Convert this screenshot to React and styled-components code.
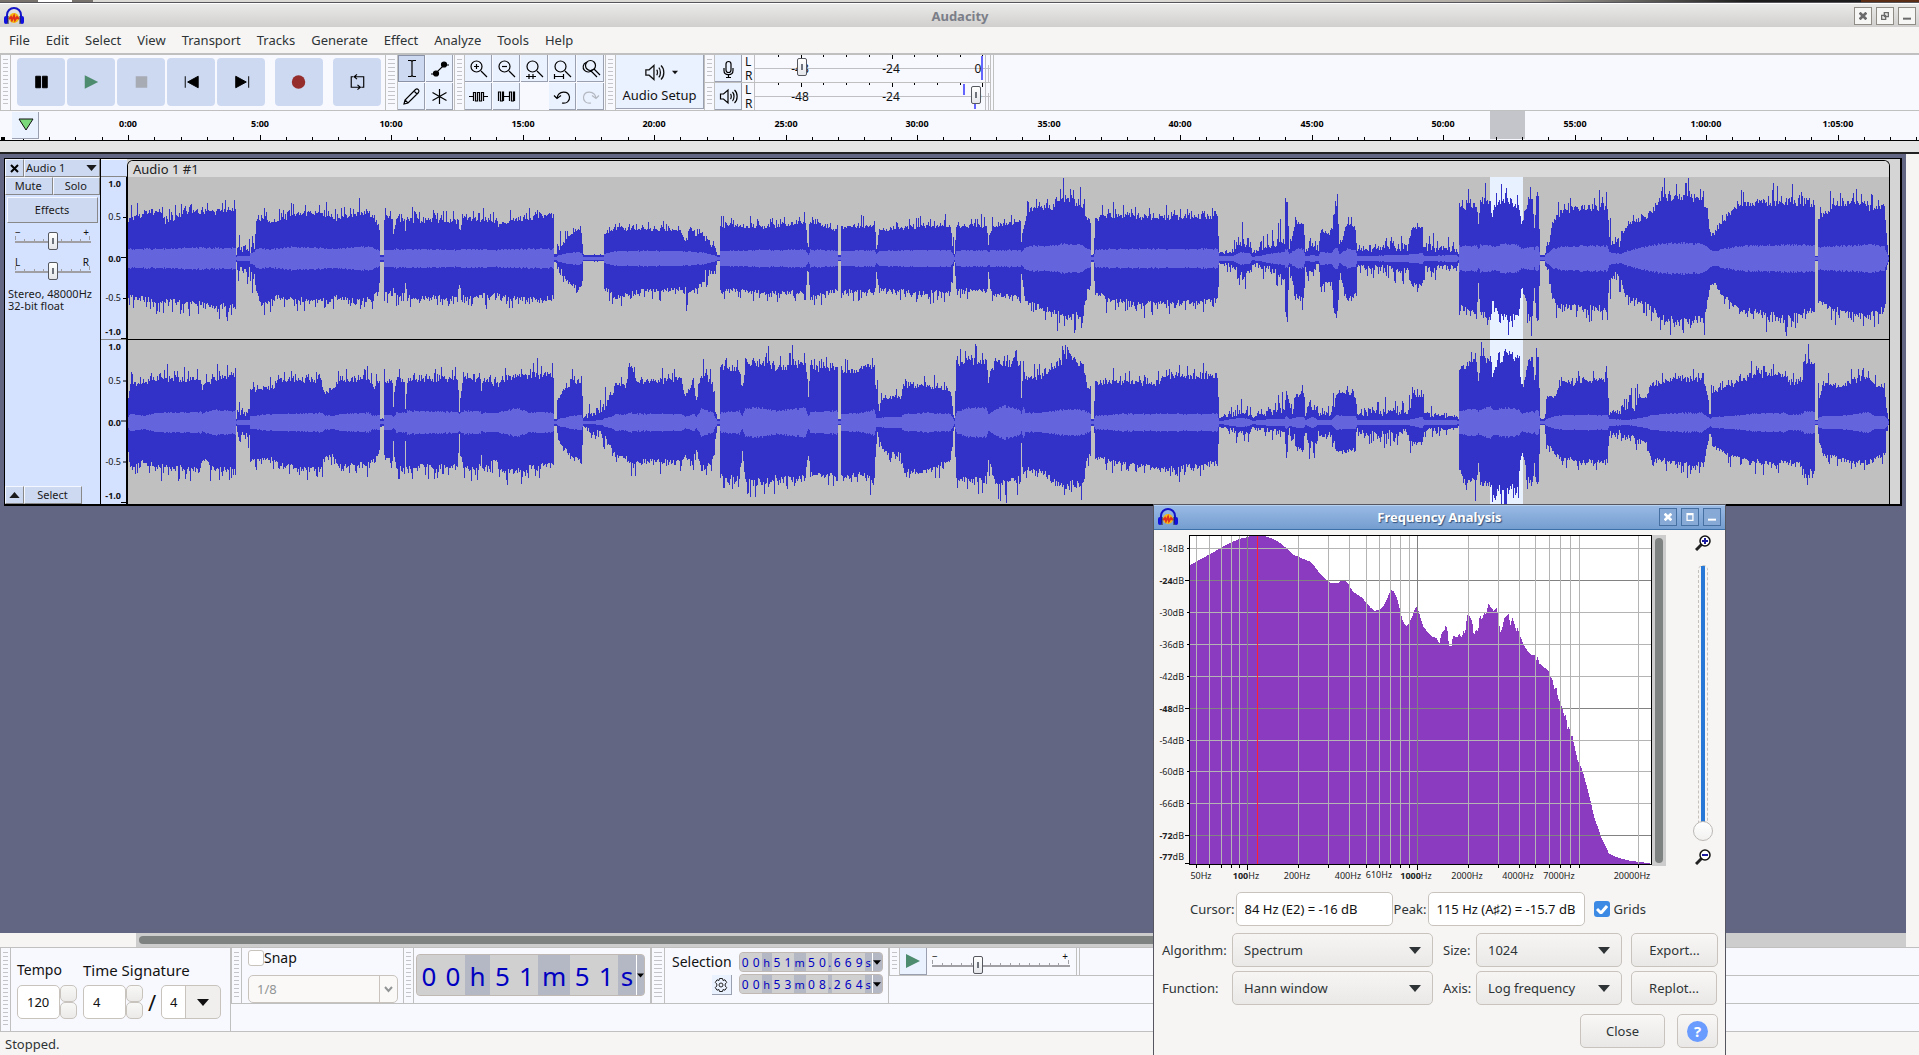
import React from 'react'
import styled, { createGlobalStyle, css } from 'styled-components'

const GlobalStyle = createGlobalStyle`
  * {
    box-sizing: border-box;
  }

  body {
    margin: 0;
    overflow: hidden;
    background: #f6f5f4;
    color: #2e3436;
    font-family: 'Noto Sans', sans-serif;
    font-size: 13px;
    line-height: 18px;
  }

  button, input, select {
    margin: 0;
    padding: 0;
    font: inherit;
    color: inherit;
  }

  svg {
    display: block;
    flex: none;
  }
`

const line = '#c0c0c0'
const paper = '#f8f9ff'

/* ---------- window frame ---------- */

const Page = styled.div`
  position: relative;
  display: flex;
  flex-direction: column;
  height: 100vh;
  overflow: hidden;
`

const DesktopEdge = styled.div`
  height: 3px;
  flex: none;
  border-bottom: 1px solid #55555a;
  background: linear-gradient(90deg, #77736c 0 38px, #fff 38px 72px, #77736c 72px 93px, #dcdad4 93px 60%, #a8a49c 80%, #1c1c1c 91% 97%, #5a2d14 97%);
`

const TitleBar = styled.header`
  display: grid;
  grid-template-columns: 1fr auto 1fr;
  align-items: center;
  height: 24px;
  flex: none;
  padding: 0 3px 0 4px;
  border-top: 1px solid #fff;
  background: linear-gradient(#eaeae8, #d0cfcd);
`

const WindowTitle = styled.h1`
  margin: 0;
  font-size: 13px;
  line-height: 18px;
  color: #7b7e88;
`

const WindowButtons = styled.div`
  display: flex;
  justify-content: flex-end;
  gap: 4px;
`

const WindowButton = styled.button`
  display: grid;
  place-items: center;
  width: 18px;
  height: 18px;
  border: 1px solid #8f8d86;
  background: #f6f6f5;
  color: #6b6b6b;

  ${p => p.$blue && css`
    border-color: #466fa2;
    background: #86a9d6;
    color: #fff;
  `}
`

const MenuBar = styled.nav`
  display: flex;
  align-items: center;
  gap: 16px;
  height: 27px;
  flex: none;
  padding: 0 9px;
  border-bottom: 1px solid ${line};
`

const MenuItem = styled.button`
  border: 0;
  background: none;
`

/* ---------- toolbars ---------- */

const ToolDock = styled.div`
  display: flex;
  height: 57px;
  flex: none;
  border-top: 1px solid ${line};
  border-bottom: 1px solid ${line};
  background: ${paper};
`

const Grip = styled.div`
  width: ${p => p.$width || 11}px;
  flex: none;
  border-left: 1px solid ${line};
  border-right: 1px solid ${line};
  padding: 4px 2px;

  &::before {
    content: '';
    display: block;
    height: 100%;
    background: repeating-linear-gradient(#c4c4c8 0 1px, transparent 1px 4px);
  }
`

const Transport = styled.div`
  display: flex;
  gap: 2px;
  padding: 3px 4px 3px 6px;
`

const TransportButton = styled.button`
  display: grid;
  place-items: center;
  width: 48px;
  height: 48px;
  margin-left: ${p => (p.$apart ? 8 : 0)}px;
  border: 0;
  border-radius: 4px;
  background: #cdd9f1;
`

const ToolGrid = styled.div`
  display: grid;
  grid-template-columns: repeat(${p => p.$cols}, 28px);
  grid-auto-rows: 28px;
`

const ToolButton = styled.button`
  display: grid;
  place-items: center;
  width: 27px;
  height: 27px;
  border: 0;
  border-right: 1px solid #9aa0b0;
  border-bottom: 1px solid #9aa0b0;
  background: #ebf2ff;
  color: #000;

  ${p => p.$pressed && css`
    border: 1px solid #8a92a8;
    background: #cdd9f1;
  `}

  ${p => p.$dim && css`
    color: #b4b8c0;
  `}
`

const SetupButton = styled.button`
  display: flex;
  flex-direction: column;
  align-items: center;
  justify-content: space-between;
  width: 88px;
  height: 54px;
  padding: 4px 0 5px;
  border: 0;
  border-right: 1px solid #9aa0b0;
  border-bottom: 1px solid #9aa0b0;
  background: #ebf2ff;
  color: #111;
`

const Meters = styled.div`
  display: flex;
  flex-direction: column;
`

const MeterRow = styled.div`
  display: flex;
  height: 28px;
  border-bottom: 1px solid ${line};

  & + & {
    border-bottom: 0;
  }
`

const Channels = styled.div`
  display: flex;
  flex-direction: column;
  width: 12px;
  padding: 0 3px;
  color: #111;
  font-size: 12px;
  line-height: 14px;
`

const Scale = styled.div`
  position: relative;
  width: 236px;
`

const Range = styled.input.attrs({ type: 'range' })`
  position: absolute;
  left: 0;
  top: ${p => p.$top || 0}px;
  width: 100%;
  height: 18px;
  appearance: none;
  background: none;

  &::-webkit-slider-thumb {
    appearance: none;
    width: 10px;
    height: 18px;
    border: 1px solid #55585f;
    border-radius: 2px;
    background: linear-gradient(#70747c, #70747c) center / 2px 6px no-repeat, linear-gradient(#fff, #e4e6ea);
  }
`

const DockEnd = styled.div`
  width: 4px;
  border-left: 1px solid ${line};
  border-right: 1px solid ${line};
`

/* ---------- timeline ---------- */

const Timeline = styled.div`
  position: relative;
  height: 30px;
  flex: none;
  overflow: hidden;
  border-bottom: 1px solid #000;
  background: ${paper};
`

const PinButton = styled(ToolButton)`
  position: absolute;
  left: 12px;
  top: 1px;
  padding-left: 2px;
`

const Spacer = styled.div`
  height: 13px;
  flex: none;
  border-bottom: 2px solid #222;
  background: #e4e4e4;
`

/* ---------- tracks ---------- */

const Workspace = styled.main`
  flex: 1;
  min-height: 0;
  margin-right: 13px;
  padding: 4px;
  background: #636683;
`

const Track = styled.section`
  display: flex;
  border: solid #000;
  border-width: 1px 2px 2px 1px;
  background: #d5d5d5;
`

const Panel = styled.div`
  display: flex;
  flex-direction: column;
  width: 96px;
  flex: none;
  border-right: 1px solid #000;
  background: #d5e2ff;
  color: #1a1a1a;
  font-size: 11px;
  line-height: 12px;
`

const PanelRow = styled.div`
  display: flex;
  height: 18px;
`

const PanelButton = styled.button`
  display: flex;
  align-items: center;
  justify-content: ${p => (p.$spread ? 'space-between' : 'center')};
  flex: ${p => (p.$width ? 'none' : 1)};
  width: ${p => (p.$width ? p.$width + 'px' : 'auto')};
  padding: 0 2px 0 1px;
  border: 1px solid #f4f7ff;
  border-right-color: #888;
  border-bottom-color: #888;
  background: #cdd9f1;
`

const EffectsButton = styled(PanelButton)`
  flex: none;
  height: 26px;
  margin: 2px 2px 5px;
`

const PanelSlider = styled.div`
  position: relative;
  height: 30px;
  margin: 0 9px 0 10px;
`

const Format = styled.p`
  flex: 1;
  margin: 0;
  padding: 0 3px;
`

const VRuler = styled.div`
  width: 26px;
  flex: none;
  border-top: 1px solid #fff;
  background: #d5e2ff;
`

const VRulerHead = styled.div`
  height: 17px;
  border-bottom: 1px solid #888;
`

const ClipArea = styled.div`
  flex: 1;
  min-width: 0;
  padding-top: 1px;
`

const Clip = styled.div`
  margin-right: 10px;
  border: 1px solid #000;
  border-bottom: 0;
  border-radius: 6px 6px 0 0;
  overflow: hidden;
`

const ClipTitle = styled.div`
  height: 16px;
  padding-left: 5px;
  background: #dadada;
  color: #222;
  line-height: 16px;
`

const Channel = styled.div`
  position: relative;
  height: ${p => p.$height}px;
  border-bottom: ${p => (p.$last ? 0 : 1)}px solid #000;
  background: #c0c0c0;

  svg {
    width: 100%;
    height: 100%;
  }
`

const ScrollRow = styled.div`
  height: 14px;
  flex: none;
  margin: 0 13px 0 136px;
  padding: 3px 220px 3px 3px;
  background: #cdcdcd;
`

const ScrollThumb = styled.div`
  height: 8px;
  border-radius: 4px;
  background: #7e8280;
`

/* ---------- bottom toolbars ---------- */

const BottomDock = styled.div`
  display: flex;
  height: 85px;
  flex: none;
  border-top: 1px solid ${line};
  border-bottom: 1px solid ${line};
  background: ${paper};
  color: #111;
`

const TempoBar = styled.div`
  display: flex;
  align-items: flex-start;
  width: 220px;
  gap: 6px;
  padding: 12px 0 0 6px;
  border-right: 1px solid ${line};
`

const Field = styled.div`
  display: flex;
  flex-direction: column;
  gap: 5px;
  font-size: ${p => p.$size || 14}px;
  line-height: 20px;
  white-space: nowrap;
`

const Inline = styled.div`
  display: flex;
  align-items: center;
  gap: ${p => p.$gap || 0}px;
`

const boxed = css`
  border: 1px solid #c8c3bd;
  border-radius: 5px;
  background: #fff;
`

const NumberBox = styled.input`
  ${boxed}
  width: 43px;
  height: 34px;
  padding-left: 9px;
  font-size: 13px;
`

const Spinner = styled.div`
  display: flex;
  flex-direction: column;

  button {
    width: 17px;
    height: 17px;
    border: 1px solid #c8c3bd;
    border-radius: 5px;
    background: linear-gradient(#f8f8f7, #ebeae8);
  }
`

const Slash = styled.span`
  width: 18px;
  font-size: 22px;
  text-align: center;
`

const SelectWrap = styled.div`
  position: relative;
  display: flex;
  width: ${p => p.$width}px;

  svg {
    position: absolute;
    right: ${p => p.$arrow || 12}px;
    top: 50%;
    margin-top: -3px;
    pointer-events: none;
  }
`

const Select = styled.select`
  width: 100%;
  height: 34px;
  padding-left: 11px;
  appearance: none;
  border: 1px solid #c8c3bd;
  border-radius: 5px;
  background: linear-gradient(#f6f5f4, #eae9e7);
  font-size: 13px;
  opacity: 1;

  ${p => p.$split && css`
    padding-left: 8px;
    background: linear-gradient(90deg, #fff 0 23px, #c8c3bd 23px 24px, #f0efee 24px);
    color: #111;
  `}

  ${p => p.$narrow && css`
    height: 28px;
    padding-left: 8px;
    background: linear-gradient(90deg, #faf9f8 0 130px, #c8c3bd 130px 131px, #faf9f8 131px);
    color: #929595;
  `}
`

const BottomRight = styled.div`
  flex: 1;
`

const BottomRow = styled.div`
  display: flex;
  height: 56px;
  border-bottom: 1px solid ${line};
`

const SnapBar = styled.div`
  display: flex;
  flex-direction: column;
  justify-content: space-between;
  width: 161px;
  padding: 1px 5px 0 6px;
  font-size: 14px;
`

const Check = styled.input.attrs({ type: 'checkbox' })`
  width: 16px;
  height: 16px;
  appearance: none;
  border: 1px solid #c8c3bd;
  border-radius: 3px;
  background: #fff;

  &:checked {
    border: 0;
    background: #3d8ae5;
  }
`

const CheckBox = styled.span`
  position: relative;
  display: flex;

  svg {
    position: absolute;
    left: 2px;
    top: 3px;
    pointer-events: none;
  }
`

const TimeBar = styled.div`
  display: flex;
  align-items: flex-start;
  width: 237px;
  padding: 6px 0 0 2px;
  border-right: 1px solid ${line};
`

const TimeBox = styled.div`
  display: flex;
  overflow: hidden;
  width: ${p => (p.$large ? 229 : 144)}px;
  height: ${p => (p.$large ? 42 : 20)}px;
  border: 1px solid #c0b8b2;
  border-radius: 4px;
  background: #d0d0d0;
  color: #0000c0;
  font-size: ${p => (p.$large ? 26 : 12)}px;
  line-height: ${p => (p.$large ? 42 : 19)}px;
`

const unitWidths = { h: 27, m: 34, s: 19, '.': 10 }

const Digit = styled.span`
  flex: ${p => (p.$unit ? `${p.$unit} 1 0` : 'none')};
  min-width: 0;
  width: ${p => (p.$large ? 24 : 11)}px;
  background: ${p => (p.$unit ? '#b3b8c4' : '#d0d0d0')};
  text-align: center;
  font-size: ${p => (p.$unit && !p.$large ? '11px' : 'inherit')};
`

const TimeMenu = styled.button`
  display: grid;
  place-items: center;
  width: ${p => (p.$large ? 8 : 10)}px;
  border: 0;
  border-left: 1px solid #fff;
  background: #b3b8c4;
  color: #000;
`

const SelectionBar = styled.div`
  display: flex;
  width: 224px;
  gap: 7px;
  padding: 4px 0 0 7px;
  border-right: 1px solid ${line};
`

const SelectionSide = styled.div`
  display: flex;
  flex-direction: column;
  align-items: flex-end;
  gap: 3px;
  font-size: 14px;
  line-height: 20px;
`

const SelectionFields = styled.div`
  display: flex;
  flex-direction: column;
  gap: 2px;
`

const GearButton = styled(ToolButton)`
  width: 20px;
  height: 20px;
`

const SpeedColumn = styled.div`
  flex: 1;
`

const SpeedBar = styled.div`
  display: flex;
  height: 28px;
  border-bottom: 1px solid ${line};
`

const SpeedSlider = styled.div`
  position: relative;
  width: 138px;
  margin: 0 6px 0 5px;
`

const StatusBar = styled.footer`
  height: 23px;
  flex: none;
  padding: 3px 5px 2px;
`

/* ---------- frequency analysis dialog ---------- */

const Dialog = styled.section`
  position: absolute;
  right: 193px;
  top: 504px;
  bottom: 0;
  width: 573px;
  border: 1px solid #55565f;
  border-bottom: 0;
  background: #f6f5f4;
`

const DialogTitle = styled(TitleBar)`
  height: 25px;
  padding: 0 4px 2px;
  border-top: 1px solid #b6d0f0;
  border-bottom: 1px solid #3c70a8;
  background: linear-gradient(#98b9e4, #759ed0);

  h1 {
    color: #fff;
    text-shadow: 1px 1px 1px #33527c;
  }
`

const Plot = styled.div`
  display: flex;
  height: 362px;
  padding-top: 5px;
`

const PlotScroll = styled.div`
  width: 14px;
  height: 331px;
  padding: 3px;
  background: #cdcdcd;

  div {
    width: 8px;
    height: 100%;
    border-radius: 4px;
    background: #7e8280;
  }
`

const ZoomColumn = styled.div`
  display: flex;
  flex-direction: column;
  align-items: center;
  flex: 1;
  padding-left: 14px;
`

const Trough = styled.div`
  position: relative;
  width: 20px;
  height: 276px;
  margin: 14px 0 8px;

  &::before {
    content: '';
    position: absolute;
    inset: 0 5px 8px;
    border: 1px dashed #c4c0bc;
    border-radius: 5px;
    background: linear-gradient(#2878d8, #2878d8) center / 4px 100% no-repeat;
  }

  input {
    position: absolute;
    left: 0;
    top: 0;
    width: 20px;
    height: 276px;
    appearance: none;
    background: none;
    writing-mode: vertical-lr;
  }

  input::-webkit-slider-thumb {
    appearance: none;
    width: 20px;
    height: 20px;
    border: 1px solid #bcb8b4;
    border-radius: 50%;
    background: linear-gradient(#fff, #f2f1f0);
  }
`

const Readout = styled.div`
  display: flex;
  align-items: center;
  margin: 0 0 7px 36px;
  gap: 1px;
`

const ReadoutBox = styled.input`
  ${boxed}
  width: 157px;
  height: 34px;
  padding: 0 8px;
  color: #111;
`

const GridsLabel = styled.label`
  display: flex;
  align-items: center;
  gap: 4px;
  margin-left: 8px;
`

const Options = styled.div`
  display: grid;
  grid-template-columns: 70px 201px 43px 146px 87px;
  row-gap: 4px;
  align-items: center;
  padding: 0 7px 0 8px;

  label:nth-of-type(even) {
    padding-left: 10px;
  }
`

const PushButton = styled.button`
  display: grid;
  place-items: center;
  width: ${p => p.$width}px;
  height: 34px;
  border: 1px solid #c8c3bd;
  border-radius: 5px;
  background: linear-gradient(#f8f7f6, #e9e8e6);
`

const OptionButton = styled(PushButton)`
  margin-left: 9px;
`

const DialogButtons = styled.div`
  display: flex;
  justify-content: flex-end;
  gap: 12px;
  padding: 9px 7px 0 0;
`

const HelpMark = styled.span`
  display: grid;
  place-items: center;
  width: 21px;
  height: 21px;
  border-radius: 50%;
  background: #6a9bff;
  color: #fff;
  font-size: 15px;
  font-weight: bold;
`

/* ---------- icons ---------- */

const Logo = () => (
  <svg width="20" height="18" viewBox="0 0 20 18">
    <circle cx="10" cy="11" r="5" fill="#f7b90f" />
    <path d="M5 12l2-2 1 3 2-4 1 4 2-3 2 2" fill="none" stroke="#e0301e" strokeWidth="2" />
    <path d="M3 11V8a7 7 0 0 1 14 0v3" fill="none" stroke="#1414c8" strokeWidth="2" />
    <rect x="0" y="9" width="4" height="8" rx="2" fill="#1010e0" />
    <rect x="16" y="9" width="4" height="8" rx="2" fill="#1010e0" />
    <path d="M4 9v8M16 9v8" stroke="#223" />
  </svg>
)

const winGlyphs = {
  close: <path d="M.5.5l5 5M5.500.5l-5 5" stroke="currentColor" strokeWidth="2" />,
  restore: <path d="M2.5.5h3v3h-3zM.5 2.500h3v3h-3z" fill="none" stroke="currentColor" />,
  maximize: <path d="M.8.5h4.400v5H.8zM1 1.200h4" fill="none" stroke="currentColor" />,
  minimize: <path d="M0 5h6" stroke="currentColor" strokeWidth="1.500" />
}

const WinButtons = ({ blue }) => (
  <WindowButtons>
    {['close', blue ? 'maximize' : 'restore', 'minimize'].map(kind => (
      <WindowButton key={kind} $blue={blue} aria-label={kind}>
        <svg width="8" height="8" viewBox="0 0 6 6">{winGlyphs[kind]}</svg>
      </WindowButton>
    ))}
  </WindowButtons>
)

const transportIcons = [
  ['Pause', <path d="M7 6h5v12H7zM14 6h5v12h-5z" stroke="#000" strokeLinejoin="round" fill="#000" />],
  ['Play', <path d="M6 5l14 7-14 7z" fill="#4d8c6f" />],
  ['Stop', <path d="M7 6h12v12H7z" fill="#a7abb4" />],
  ['Skip to Start', <path d="M6.500 6v12M20 6L9 12l11 6z" fill="#000" stroke="#000" strokeWidth="1" />],
  ['Skip to End', <path d="M20.500 6v12M7 6l11 6-11 6z" fill="#000" stroke="#000" strokeWidth="1" />],
  ['Record', <circle cx="12" cy="12" r="7" fill="#962d2d" />],
  ['Loop', <path d="M8.500 6.500h-2v11h9M13 15l3 2.500-3 2.500M17 17.500h2.500v-11h-9M12.500 4l-3 2.500 3 2.500" fill="none" stroke="#000" strokeWidth="1.200" />]
]

const lens = <path d="M15 15l6 6M16 10.500a5.500 5.500 0 1 1-11 0 5.500 5.500 0 0 1 11 0z" />
const toolIcons = {
  select: <path d="M9 4.500h3l1 1 1-1h3M9 20.500h3l1-1 1 1h3M13 5v15" />,
  envelope: <g><path d="M4 18h4l9-9h5" /><circle cx="9" cy="17.500" r="2.500" fill="currentColor" /><circle cx="17" cy="8.500" r="2.500" fill="currentColor" /></g>,
  draw: <path d="M5 20l1-4L16.500 5.500c2-1.500 4.500 1 3 3L9 19zM15 7l3 3M6 16l3 3" />,
  multi: <path d="M12.500 5v15M5.500 8.500l14 8M19.500 8.500l-14 8" />,
  zoomIn: <g>{lens}<path d="M10.500 8v5M8 10.500h5" /></g>,
  zoomOut: <g>{lens}<path d="M8 10.500h5" /></g>,
  fitSelection: <g>{lens}<path d="M4 20.500h10M7 18v5M11 18v5" /></g>,
  fitProject: <g>{lens}<path d="M4 20.500h10M4.500 18v5M13.500 18v5" /></g>,
  zoomToggle: <g><path d="M17.500 9.500a5 5 0 1 1-10 0 5 5 0 0 1 10 0zM16 13l6 6" /><path d="M8 6.500a5 5 0 1 0 6.500 7M13 15l6 6" /></g>,
  trim: <path d="M3 12.500h4.500V17M17.500 8v4.500H22M7.500 17V8.500h2V17h2V8.500h2V17h2V8.500h2V17" />,
  silence: <path d="M4.500 17V8h2v9h2V8h1v9M9 12.500h7M15.500 17V8h2v9h2V8h1v9" />,
  undo: <path d="M12 19c4.500 1 8-2 7.500-6C18.500 6.500 8.500 6 7 14M4 11.500l3 3 4-3" />,
  redo: <path d="M13 19c-4.500 1-8-2-7.500-6C6.500 6.500 16.500 6 18 14M21 11.500l-3 3-4-3" />,
  mic: <path d="M10 8a2.500 2.500 0 0 1 5 0v6a2.500 2.500 0 0 1-5 0zM8 12v2.500c0 5.500 9 5.500 9 0V12M12.500 19v2.500M10 21.500h5" />,
  speaker: <path d="M4.500 10v5h3l4.500 4V6L7.500 10zM14.500 10c1 1 1 4 0 5M16.500 8c2 2 2 7 0 9M18.500 6c3.500 3 3.500 10 0 13" />
}

const Icon = ({ name, size = 25 }) => (
  <svg width={size} height={size} viewBox="0 0 25 25" fill="none" stroke="currentColor" strokeWidth="1.200">
    {toolIcons[name]}
  </svg>
)

const Tool = ({ icon, ...rest }) => (
  <ToolButton aria-label={icon} {...rest}>
    <Icon name={icon} />
  </ToolButton>
)

const Arrow = ({ w = 12, h = 7, up }) => (
  <svg width={w} height={h} viewBox="0 0 12 7">
    <path d={up ? 'M0 7h12L6 0z' : 'M0 0h12L6 7z'} fill="currentColor" />
  </svg>
)

const Magnifier = ({ minus }) => (
  <svg width="16" height="16" viewBox="0 0 16 16">
    <path d="M7 9l-6 6" stroke="#222" strokeWidth="3" />
    <circle cx="10" cy="6" r="5" fill="#fff" stroke="#111" strokeWidth="1.500" />
    <path d={minus ? 'M7 6h6' : 'M7 6h6M10 3v6'} stroke="#1c1ca0" strokeWidth="2" />
  </svg>
)

/* ---------- drawings ---------- */

const Meter = ({ label, value, peaks }) => (
  <Scale>
    <svg width="236" height="27" shapeRendering="crispEdges">
      <path d="M0.500 0v27M0 13.500h236M231.500 0v27M234.500 10v17" stroke="#c0c0c4" />
      <path d={[...Array(10).keys()].map(i => `M${24 + Math.round(i * 22.7)}.5 0v${i % 4 === 1 || i === 9 ? 4 : 2}`).join('')} stroke="#000" />
      <g fontSize="12" fill="#111" textAnchor="middle" fontFamily="'Noto Sans', sans-serif">
        <text x="46" y="18">-48</text>
        <text x="137" y="18">-24</text>
        <text x="224" y="18">0</text>
      </g>
      {peaks.map(([x, y, h]) => <rect key={x + y} x={x} y={y} width="2" height={h} fill="#6464ff" />)}
    </svg>
    <Range $top={3} defaultValue={value} aria-label={label} />
  </Scale>
)

const majors = ['0:00', '5:00', '10:00', '15:00', '20:00', '25:00', '30:00', '35:00', '40:00', '45:00', '50:00', '55:00', '1:00:00', '1:05:00']

const TimeRuler = () => (
  <svg width="100%" height="29">
    <rect x="1490" y="0" width="35" height="28" fill="#c4c5cb" />
    <g shapeRendering="crispEdges" fill="#000">
      {[...Array(75).keys()].map(i => {
        const x = Math.round(128 + (i - 5) * 26.3)
        return <rect key={i} x={x} y={i % 5 === 0 && i > 0 ? 24 : 26} width="1" height="5" />
      })}
      <rect x="1" y="26" width="4" height="3" />
    </g>
    <g fontSize="9" fontWeight="bold" textAnchor="middle" fill="#000" fontFamily="'Noto Sans', sans-serif">
      {majors.map((m, i) => <text key={m} x={Math.round(128 + i * 131.5)} y="16">{m}</text>)}
    </g>
  </svg>
)

// [x, upper, lower, rms] envelope points in pixels, straight lines in between
const left = [
  [128, 38, 37, 9], [147, 45, 41, 9], [160, 45, 44, 9], [165, 36, 42, 9], [170, 38, 41, 9], [183, 45, 43, 10], [235, 47, 48, 10], [236, 3, 3, 1], [237, 12, 12, 2], [249, 10, 12, 2], [250, 10, 20, 5], [254, 11, 22, 6], [256, 38, 32, 9], [262, 39, 46, 9], [275, 36, 38, 9], [290, 43, 40, 11], [320, 44, 41, 10], [335, 38, 38, 9], [355, 44, 42, 11], [372, 44, 40, 11], [379, 28, 25, 7], [380, 3, 3, 1], [383, 3, 3, 1], [384, 40, 34, 8], [392, 38, 34, 8], [393, 24, 28, 8], [396, 38, 38, 9], [404, 38, 36, 9], [405, 26, 24, 8], [407, 38, 38, 9], [457, 36, 38, 8], [459, 22, 24, 8], [463, 40, 38, 9], [496, 36, 36, 8], [498, 32, 36, 8], [510, 38, 38, 9], [540, 42, 40, 9], [553, 42, 38, 9], [554, 4, 3, 1], [556, 4, 3, 1], [558, 14, 16, 3], [576, 28, 28, 6], [581, 26, 28, 5], [583, 3, 2, 1], [603, 3, 2, 1], [604, 24, 28, 4], [614, 30, 38, 7], [640, 28, 32, 7], [680, 28, 30, 7], [685, 16, 28, 6], [690, 30, 34, 7], [697, 20, 30, 5], [699, 28, 25, 6], [714, 11, 14, 3], [717, 3, 2, 1], [719, 3, 2, 1], [720, 32, 30, 7], [760, 31, 33, 8], [805, 35, 34, 8], [808, 12, 12, 3], [810, 38, 38, 8], [820, 34, 34, 8], [837, 27, 31, 7], [838, 3, 2, 1], [840, 3, 2, 1], [841, 31, 32, 7], [874, 33, 32, 8], [876, 14, 13, 4], [879, 28, 30, 7], [920, 31, 34, 8], [950, 32, 32, 8], [954, 4, 3, 1], [956, 32, 31, 7], [986, 32, 31, 8], [988, 18, 16, 6], [992, 32, 34, 8], [1020, 36, 38, 8], [1021, 18, 16, 6], [1026, 42, 44, 11], [1032, 50, 44, 12], [1050, 50, 52, 12], [1063, 60, 58, 14], [1083, 52, 56, 13], [1086, 38, 32, 10], [1090, 34, 28, 8], [1091, 3, 3, 1], [1093, 3, 3, 1], [1095, 38, 34, 8], [1110, 43, 41, 9], [1157, 40, 45, 9], [1217, 42, 41, 9], [1219, 5, 4, 2], [1233, 9, 9, 2], [1240, 20, 22, 6], [1249, 18, 18, 5], [1252, 5, 5, 1], [1269, 14, 12, 4], [1284, 21, 20, 6], [1285, 56, 52, 9], [1287, 54, 50, 9], [1289, 12, 10, 4], [1296, 36, 38, 9], [1303, 36, 38, 9], [1305, 8, 12, 2], [1313, 18, 14, 3], [1318, 8, 8, 2], [1320, 26, 28, 6], [1331, 24, 20, 5], [1335, 52, 56, 10], [1337, 50, 54, 10], [1339, 14, 14, 4], [1347, 34, 40, 9], [1355, 30, 36, 8], [1357, 9, 9, 2], [1407, 13, 13, 3], [1412, 30, 27, 4], [1422, 30, 23, 5], [1424, 12, 12, 2], [1456, 10, 9, 3], [1458, 4, 4, 1], [1459, 50, 46, 12], [1476, 54, 57, 12], [1478, 30, 22, 9], [1480, 58, 56, 13], [1490, 57, 58, 13], [1492, 38, 40, 12], [1494, 52, 50, 12], [1505, 60, 60, 14], [1518, 52, 58, 13], [1521, 36, 28, 9], [1525, 40, 38, 9], [1528, 60, 56, 11], [1532, 58, 56, 11], [1534, 30, 28, 9], [1536, 60, 56, 11], [1538, 58, 56, 11], [1540, 3, 2, 1], [1544, 3, 2, 1], [1546, 14, 13, 4], [1549, 16, 20, 6], [1552, 36, 40, 9], [1560, 45, 48, 11], [1580, 50, 47, 12], [1607, 50, 50, 12], [1609, 22, 20, 6], [1620, 18, 20, 4], [1627, 34, 38, 7], [1647, 42, 46, 12], [1660, 58, 58, 14], [1680, 62, 63, 15], [1703, 57, 60, 14], [1707, 44, 42, 11], [1710, 22, 25, 8], [1715, 25, 25, 7], [1723, 36, 38, 9], [1740, 54, 50, 12], [1780, 56, 58, 13], [1814, 54, 50, 13], [1815, 2, 2, 1], [1817, 2, 2, 1], [1818, 38, 42, 10], [1833, 52, 50, 12], [1853, 57, 56, 12], [1869, 50, 54, 14], [1884, 53, 50, 11], [1886, 20, 20, 6], [1888, 3, 3, 1]
]

const right = [
  [128, 24, 26, 5], [130, 38, 46, 8], [143, 38, 38, 6], [156, 44, 44, 9], [200, 40, 46, 10], [202, 34, 36, 9], [215, 44, 46, 12], [235, 46, 46, 11], [236, 3, 3, 1], [237, 12, 12, 2], [249, 12, 12, 2], [250, 32, 38, 6], [272, 34, 36, 8], [281, 42, 42, 8], [321, 42, 47, 9], [324, 28, 34, 7], [333, 34, 32, 6], [339, 42, 44, 8], [368, 42, 40, 9], [374, 34, 38, 6], [379, 42, 28, 7], [380, 3, 3, 1], [383, 3, 3, 1], [384, 40, 32, 7], [392, 40, 36, 7], [393, 20, 22, 5], [396, 42, 46, 9], [404, 42, 46, 10], [405, 18, 22, 8], [407, 42, 44, 11], [457, 43, 42, 10], [459, 18, 20, 8], [463, 44, 46, 11], [480, 42, 44, 11], [481, 30, 32, 8], [483, 42, 46, 9], [498, 34, 36, 9], [500, 42, 46, 10], [518, 46, 48, 14], [529, 46, 44, 9], [550, 47, 42, 10], [553, 42, 38, 8], [554, 3, 3, 1], [556, 3, 3, 1], [558, 24, 16, 3], [571, 40, 34, 6], [581, 42, 38, 7], [583, 4, 3, 1], [589, 10, 10, 1], [600, 14, 14, 2], [612, 28, 26, 6], [616, 40, 34, 8], [625, 36, 34, 7], [631, 56, 42, 9], [636, 40, 38, 8], [681, 42, 39, 8], [685, 25, 32, 5], [693, 42, 36, 8], [696, 20, 26, 5], [701, 48, 46, 13], [712, 38, 38, 10], [717, 3, 3, 1], [719, 3, 3, 1], [720, 55, 52, 9], [739, 52, 56, 11], [742, 34, 28, 6], [745, 58, 58, 13], [755, 60, 60, 15], [775, 54, 56, 11], [805, 58, 56, 14], [808, 26, 24, 6], [810, 54, 50, 10], [837, 52, 54, 11], [838, 3, 2, 1], [840, 3, 2, 1], [841, 50, 52, 8], [860, 52, 52, 9], [874, 58, 55, 12], [876, 20, 16, 4], [885, 24, 28, 5], [900, 25, 30, 5], [904, 36, 48, 8], [925, 36, 48, 9], [950, 32, 38, 8], [954, 4, 4, 1], [956, 58, 58, 10], [967, 60, 54, 14], [986, 62, 56, 14], [988, 40, 38, 7], [995, 60, 58, 12], [1003, 60, 60, 16], [1020, 58, 56, 12], [1021, 25, 20, 8], [1023, 60, 54, 16], [1025, 42, 46, 9], [1040, 45, 48, 9], [1060, 58, 60, 12], [1067, 68, 62, 13], [1083, 55, 58, 12], [1087, 36, 34, 10], [1090, 34, 32, 8], [1091, 3, 3, 1], [1093, 3, 3, 1], [1095, 39, 34, 6], [1120, 40, 41, 8], [1155, 38, 44, 8], [1165, 45, 46, 8], [1217, 45, 40, 8], [1219, 4, 4, 1], [1240, 13, 12, 4], [1249, 12, 10, 3], [1252, 4, 4, 1], [1269, 12, 10, 3], [1284, 15, 12, 3], [1286, 30, 32, 6], [1289, 10, 10, 3], [1296, 26, 24, 5], [1303, 30, 26, 5], [1305, 6, 10, 2], [1312, 18, 32, 5], [1318, 10, 16, 2], [1331, 9, 11, 2], [1336, 27, 30, 7], [1347, 30, 28, 6], [1355, 24, 26, 6], [1357, 9, 9, 2], [1370, 13, 16, 2], [1407, 11, 10, 2], [1412, 28, 20, 3], [1422, 26, 18, 5], [1424, 9, 9, 2], [1456, 5, 5, 2], [1458, 3, 3, 1], [1459, 52, 48, 11], [1476, 62, 60, 13], [1478, 38, 40, 10], [1480, 62, 60, 12], [1490, 62, 60, 15], [1492, 48, 60, 12], [1505, 68, 68, 14], [1518, 62, 62, 13], [1521, 32, 26, 9], [1524, 40, 36, 9], [1528, 58, 56, 10], [1532, 62, 62, 11], [1534, 34, 40, 9], [1536, 62, 60, 11], [1538, 60, 56, 11], [1540, 3, 2, 1], [1544, 3, 2, 1], [1546, 24, 20, 3], [1555, 26, 30, 6], [1560, 38, 36, 7], [1607, 42, 38, 7], [1609, 9, 9, 3], [1627, 18, 16, 2], [1646, 24, 19, 5], [1650, 38, 34, 7], [1680, 43, 40, 9], [1703, 42, 42, 9], [1707, 28, 22, 5], [1710, 10, 9, 3], [1712, 30, 22, 5], [1730, 36, 33, 6], [1750, 46, 38, 8], [1775, 48, 40, 9], [1785, 48, 38, 9], [1790, 38, 40, 7], [1802, 42, 42, 8], [1804, 56, 50, 11], [1814, 58, 48, 10], [1815, 2, 2, 1], [1817, 2, 2, 1], [1818, 20, 16, 4], [1823, 38, 32, 6], [1840, 34, 34, 6], [1850, 40, 38, 7], [1868, 46, 40, 10], [1875, 36, 34, 6], [1884, 33, 32, 6], [1886, 16, 16, 4], [1888, 3, 2, 1]
]

const noise = n => {
  const s = Math.sin(n * 12.9898) * 43758.5453
  return s - Math.floor(s)
}

const buildWave = (points, middle, seed) => {
  let peak = ''
  let rms = ''
  let k = 0
  for (let x = 128; x < 1889; x++) {
    while (k < points.length - 2 && points[k + 1][0] <= x) k++
    const a = points[k]
    const b = points[k + 1]
    const t = Math.min(1, (x - a[0]) / (b[0] - a[0]))
    const at = i => a[i] + (b[i] - a[i]) * t
    const quiet = at(1) < 22 && at(1) > 6
    const jitter = n => {
      const tall = noise(n * 1.7 + 3)
      return quiet
        ? 0.5 + noise(n) * 0.6 + tall ** 5 * 1.1
        : 0.93 + noise(n) * 0.14 + tall ** 6 * 0.32
    }
    const up = Math.min(middle - 1, Math.round(at(1) * jitter(x + seed)))
    const down = Math.min(middle - 1, Math.round(at(2) * jitter(x + seed + 5000)))
    const soft = Math.round(at(3) * (0.92 + noise(x + seed + 900) * 0.16))
    const px = x - 127.5
    peak += `M${px} ${middle - up}V${middle + down + 1}`
    rms += `M${px} ${middle - soft}V${middle + soft + 1}`
  }
  return { peak, rms }
}

const Waveform = ({ points, height, seed }) => {
  const wave = buildWave(points, Math.floor(height / 2), seed)
  return (
    <svg viewBox={`0 0 1761 ${height}`} preserveAspectRatio="none" shapeRendering="crispEdges">
      <rect x="1362" y="0" width="33" height={height} fill="#e8f1ff" />
      <path d={wave.peak} stroke="#3232c8" />
      <path d={wave.rms} stroke="#6464dc" />
    </svg>
  )
}

const LevelRuler = ({ height, last }) => {
  const mid = height / 2
  return (
    <svg width="26" height={height + 1}>
      <g fontSize="9" textAnchor="end" fill="#111" fontFamily="'Noto Sans', sans-serif">
        <text x="20" y="10" fontWeight="bold">1.0</text>
        <text x="20" y={mid - 38}>0.5</text>
        <text x="20" y={mid + 4} fontWeight="bold">0.0</text>
        <text x="20" y={mid + 43}>-0.5</text>
        <text x="20" y={height - 4} fontWeight="bold">-1.0</text>
      </g>
      <path d={`M22 ${mid - 40.5}h4M20 ${mid - 0.5}h6M22 ${mid + 40.5}h4M20 ${height - 0.5}h6`} stroke="#000" />
      {!last && <path d={`M0 ${height + 0.5}h26`} stroke="#888" />}
      <path d="M25.500 0v400" stroke="#000" />
    </svg>
  )
}

const ScaleSvg = styled.svg`
  overflow: visible;
`

const SliderScale = ({ width, y, count, labels }) => (
  <ScaleSvg width={width} height="27" shapeRendering="crispEdges">
    <rect x="0" y={y} width={width} height="2" fill="#a0a0a4" />
    <path d={[...Array(count + 1).keys()].map(i => `M${Math.round(i * (width - 2) / count) + 0.5} ${y - (i % count ? 2 : 5)}v4`).join('')} stroke="#a0a0a4" />
    <g fontSize="10" fill="#111" fontFamily="'Noto Sans', sans-serif">
      <text x="0" y={y - 5}>{labels[0]}</text>
      <text x={width - 2} y={y - 5} textAnchor="end">{labels[1]}</text>
    </g>
  </ScaleSvg>
)

const spectrum = [
  107, 195, 124, 184, 160, 162, 190, 143, 215, 128, 240, 116, 260, 111, 268, 108, 308, 107, 325, 113, 345, 124, 362, 138, 385, 162, 405, 172, 430, 183, 445, 200, 460, 222, 475, 238, 490, 249, 505, 249, 521, 238, 532, 246, 547, 273, 572, 292, 595, 322, 605, 331, 618, 330, 632, 314, 645, 282, 650, 270, 657, 271, 665, 288, 674, 325, 683, 365, 692, 376, 697, 374, 708, 348, 718, 318, 723, 326, 738, 380, 760, 408, 773, 413, 781, 430, 788, 396, 795, 390, 799, 373, 804, 395, 807, 437, 814, 437, 818, 405, 830, 412, 835, 400, 842, 412, 846, 392, 851, 400, 856, 345, 862, 345, 870, 362, 874, 405, 881, 388, 886, 395, 891, 340, 896, 360, 902, 338, 907, 342, 914, 312, 922, 322, 928, 332, 937, 320, 941, 360, 947, 397, 951, 385, 957, 352, 968, 340, 973, 375, 979, 352, 985, 375, 991, 395, 993, 380, 998, 405, 1015, 445, 1028, 462, 1040, 465, 1043, 482, 1046, 468, 1052, 490, 1075, 510, 1087, 540, 1093, 570, 1097, 555, 1102, 595, 1110, 610, 1120, 650, 1123, 640, 1128, 690, 1132, 675, 1136, 720, 1140, 700, 1143, 720, 1147, 740, 1155, 780, 1168, 810, 1185, 880, 1200, 950, 1220, 1015, 1240, 1060, 1260, 1070, 1290, 1080, 1337, 1087, 1352, 1090
]

const gridFreqs = [50, 60, 70, 80, 90, 100, 200, 300, 400, 500, 600, 700, 800, 900, 1000, 2000, 3000, 4000, 5000, 6000, 7000, 8000, 9000, 20000]
const freqLabels = [['50', 12], ['100', 57], ['200', 108], ['400', 159], ['610', 190], ['1000', 227], ['2000', 278], ['4000', 329], ['7000', 370], ['20000', 443]]
const fx = f => Math.round(57 + (Math.log10(f) - 2) * 169.8)
const levels = [-18, -24, -30, -36, -42, -48, -54, -60, -66, -72]
const ly = db => Math.round(12 + (-18 - db) * 5.32)
const strongLevel = db => db % 24 === 0 || db === -72

const SpectrumPlot = () => (
  <svg width="498" height="353" fontFamily="'Noto Sans', sans-serif" fontSize="9" fill="#222">
    <g textAnchor="end">
      {levels.map(db => (
        <text key={db} x="30" y={ly(db) + 5}>
          <tspan fontWeight={strongLevel(db) ? 'bold' : 'normal'}>{db}</tspan>dB
        </text>
      ))}
      <text x="30" y="325"><tspan fontWeight="bold">-77</tspan>dB</text>
    </g>
    <g transform="translate(36 1)" shapeRendering="crispEdges">
      <rect width="462" height="328" fill="#fff" />
      <svg width="462" height="328" viewBox="107 107 1249 984" preserveAspectRatio="none">
        <polygon points={`107,1091 ${spectrum.join(' ')} 1352,1091`} fill="#8b3bc0" />
        <rect x="1352" y="910" width="4" height="181" fill="#8b3bc0" />
      </svg>
      {levels.map(db => <rect key={db} x="0" y={ly(db)} width="462" height="1" fill={strongLevel(db) ? '#828282' : '#b4b4b4'} />)}
      {gridFreqs.map(f => <rect key={f} x={fx(f)} y="0" width="1" height="328" fill={f === 100 || f === 1000 ? '#828282' : '#b4b4b4'} />)}
      <rect x="67" y="0" width="1" height="328" fill="#ff2030" />
      <rect x="-.5" y="-.5" width="462" height="329" fill="none" stroke="#000" />
      <path d={levels.map(db => `M-1 ${ly(db) + 0.5}h${strongLevel(db) ? -4 : -2}`).join('') + 'M-1 327.500h-4'} stroke="#000" />
      <path d={gridFreqs.map(f => `M${fx(f) + 0.5} 329v${f === 100 || f === 1000 ? 5 : 3}`).join('')} stroke="#000" />
    </g>
    <g textAnchor="middle">
      {freqLabels.map(([f, x]) => (
        <text key={f} x={x + 35} y={f === '610' ? 343 : 344}>
          <tspan fontWeight={f === '100' || f === '1000' ? 'bold' : 'normal'}>{f}</tspan>Hz
        </text>
      ))}
    </g>
  </svg>
)

/* ---------- parts ---------- */

const TimeControl = ({ value, large, label }) => (
  <TimeBox $large={large} role="group" aria-label={label}>
    {value.split('').map((c, i) => (
      <Digit key={i} $large={large} $unit={unitWidths[c]}>{c}</Digit>
    ))}
    <TimeMenu $large={large} aria-label={label + ' format'}>
      <Arrow w={large ? 7 : 8} h={5} />
    </TimeMenu>
  </TimeBox>
)

const Option = ({ id, label, value, width }) => (
  <>
    <label htmlFor={id}>{label}</label>
    <SelectWrap $width={width}>
      <Select id={id} defaultValue={value}>
        <option>{value}</option>
      </Select>
      <Arrow />
    </SelectWrap>
  </>
)

const SpinButtons = () => (
  <Spinner>
    <button aria-label="Increase" />
    <button aria-label="Decrease" />
  </Spinner>
)

const FrequencyAnalysis = () => (
  <Dialog role="dialog" aria-labelledby="fa-title">
    <DialogTitle>
      <Logo />
      <WindowTitle id="fa-title">Frequency Analysis</WindowTitle>
      <WinButtons blue />
    </DialogTitle>
    <Plot>
      <SpectrumPlot />
      <PlotScroll><div /></PlotScroll>
      <ZoomColumn>
        <Magnifier />
        <Trough>
          <input type="range" aria-label="Zoom" defaultValue="100" />
        </Trough>
        <Magnifier minus />
      </ZoomColumn>
    </Plot>
    <Readout>
      <label htmlFor="cursor">Cursor:</label>
      <ReadoutBox id="cursor" readOnly value="84 Hz (E2) = -16 dB" />
      <label htmlFor="peak">Peak:</label>
      <ReadoutBox id="peak" readOnly value="115 Hz (A♯2) = -15.7 dB" />
      <GridsLabel>
        <CheckBox>
          <Check defaultChecked />
          <svg width="12" height="10" viewBox="0 0 12 10">
            <path d="M1 5l4 4 6-7" fill="none" stroke="#fff" strokeWidth="3" />
          </svg>
        </CheckBox>
        Grids
      </GridsLabel>
    </Readout>
    <Options>
      <Option id="algorithm" label="Algorithm:" value="Spectrum" width={201} />
      <Option id="size" label="Size:" value="1024" width={146} />
      <OptionButton $width={87}>Export...</OptionButton>
      <Option id="function" label="Function:" value="Hann window" width={201} />
      <Option id="axis" label="Axis:" value="Log frequency" width={146} />
      <OptionButton $width={86}>Replot...</OptionButton>
    </Options>
    <DialogButtons>
      <PushButton $width={85}>Close</PushButton>
      <PushButton $width={41} aria-label="Help"><HelpMark>?</HelpMark></PushButton>
    </DialogButtons>
  </Dialog>
)

const menus = ['File', 'Edit', 'Select', 'View', 'Transport', 'Tracks', 'Generate', 'Effect', 'Analyze', 'Tools', 'Help']

const AudioTrack = () => (
  <Track>
    <Panel>
      <PanelRow>
        <PanelButton $width={19} aria-label="Close track">
          <svg width="9" height="9" viewBox="0 0 9 9"><path d="M1 1l7 7M8 1L1 8" stroke="#000" strokeWidth="2" /></svg>
        </PanelButton>
        <PanelButton $spread>Audio 1<Arrow w={11} h={6} /></PanelButton>
      </PanelRow>
      <PanelRow>
        <PanelButton>Mute</PanelButton>
        <PanelButton>Solo</PanelButton>
      </PanelRow>
      <EffectsButton>Effects</EffectsButton>
      <PanelSlider>
        <SliderScale width={76} y={13} count={8} labels={['−', '+']} />
        <Range $top={4} defaultValue="50" aria-label="Gain" />
      </PanelSlider>
      <PanelSlider>
        <SliderScale width={76} y={13} count={8} labels={['L', 'R']} />
        <Range $top={4} defaultValue="50" aria-label="Pan" />
      </PanelSlider>
      <Format>Stereo, 48000Hz<br />32-bit float</Format>
      <PanelRow>
        <PanelButton $width={19} aria-label="Collapse"><Arrow w={11} h={6} up /></PanelButton>
        <PanelButton $width={58}>Select</PanelButton>
      </PanelRow>
    </Panel>
    <VRuler>
      <VRulerHead />
      <LevelRuler height={162} />
      <LevelRuler height={163} last />
    </VRuler>
    <ClipArea>
      <Clip>
        <ClipTitle>Audio 1 #1</ClipTitle>
        <Channel $height={163}><Waveform points={left} height={162} seed={11} /></Channel>
        <Channel $height={164} $last><Waveform points={right} height={164} seed={907} /></Channel>
      </Clip>
    </ClipArea>
  </Track>
)

const App = () => (
  <Page>
    <GlobalStyle />
    <DesktopEdge />
    <TitleBar>
      <Logo />
      <WindowTitle>Audacity</WindowTitle>
      <WinButtons />
    </TitleBar>
    <MenuBar>
      {menus.map(m => <MenuItem key={m}>{m}</MenuItem>)}
    </MenuBar>

    <ToolDock>
      <Grip />
      <Transport>
        {transportIcons.map(([name, shape], i) => (
          <TransportButton key={name} aria-label={name} $apart={i > 4}>
            <svg width="24" height="24" viewBox="0 0 25 24">{shape}</svg>
          </TransportButton>
        ))}
      </Transport>
      <Grip $width={13} />
      <ToolGrid $cols={2}>
        <Tool icon="select" $pressed />
        <Tool icon="envelope" />
        <Tool icon="draw" />
        <Tool icon="multi" />
      </ToolGrid>
      <Grip />
      <ToolGrid $cols={5}>
        <Tool icon="zoomIn" />
        <Tool icon="zoomOut" />
        <Tool icon="fitSelection" />
        <Tool icon="fitProject" />
        <Tool icon="zoomToggle" />
        <Tool icon="trim" />
        <Tool icon="silence" />
        <span />
        <Tool icon="undo" />
        <Tool icon="redo" $dim />
      </ToolGrid>
      <Grip />
      <SetupButton>
        <Inline $gap={4}><Icon name="speaker" size={27} /><Arrow w={6} h={5} /></Inline>
        Audio Setup
      </SetupButton>
      <Meters>
        <MeterRow>
          <Grip />
          <Tool icon="mic" />
          <Channels><span>L</span><span>R</span></Channels>
          <Meter label="Recording level" value={19} peaks={[[227, 1, 24]]} />
        </MeterRow>
        <MeterRow>
          <Grip />
          <Tool icon="speaker" />
          <Channels><span>L</span><span>R</span></Channels>
          <Meter label="Playback level" value={96} peaks={[[209, 1, 11], [220, 14, 12]]} />
        </MeterRow>
      </Meters>
      <DockEnd />
    </ToolDock>

    <Timeline>
      <TimeRuler />
      <PinButton aria-label="Pin play head">
        <svg width="16" height="14" viewBox="0 0 16 14">
          <path d="M1 1h14L8 12z" fill="#7bd87b" stroke="#111" />
        </svg>
      </PinButton>
    </Timeline>
    <Spacer />

    <Workspace>
      <AudioTrack />
    </Workspace>
    <ScrollRow><ScrollThumb /></ScrollRow>

    <BottomDock>
      <Grip />
      <TempoBar>
        <Field>
          <label htmlFor="tempo">Tempo</label>
          <Inline>
            <NumberBox id="tempo" defaultValue="120" />
            <SpinButtons />
          </Inline>
        </Field>
        <Field $size={15}>
          <label htmlFor="upper">Time Signature</label>
          <Inline>
            <NumberBox id="upper" defaultValue="4" />
            <SpinButtons />
            <Slash>/</Slash>
            <SelectWrap $width={60}>
              <Select $split aria-label="Lower time signature" defaultValue="4"><option>4</option></Select>
              <Arrow />
            </SelectWrap>
          </Inline>
        </Field>
      </TempoBar>
      <BottomRight>
        <BottomRow>
          <Grip />
          <SnapBar>
            <Inline>
              <Check id="snap" />
              <label htmlFor="snap">Snap</label>
            </Inline>
            <SelectWrap $width={150} $arrow={5}>
              <Select $narrow disabled aria-label="Snap to" defaultValue="1/8"><option>1/8</option></Select>
              <svg width="9" height="7" viewBox="0 0 9 7"><path d="M1 1l3.500 4L8 1" fill="none" stroke="#929595" strokeWidth="2" /></svg>
            </SelectWrap>
          </SnapBar>
          <Grip />
          <TimeBar>
            <TimeControl large value="00h51m51s" label="Audio position" />
          </TimeBar>
          <Grip $width={14} />
          <SelectionBar>
            <SelectionSide>
              Selection
              <GearButton aria-label="Selection options">
                <svg width="16" height="16" viewBox="0 0 16 16" fill="none" stroke="#222">
                  <path d="M6.500 1.500h3l.5 2 2-.7 1.700 2.600L12.200 7v2l1.500 1.600L12 13.200l-2-.7-.5 2h-3l-.5-2-2 .7-1.700-2.600L3.800 9V7L2.300 5.400 4 2.800l2 .7z" />
                  <circle cx="8" cy="8" r="2" />
                </svg>
              </GearButton>
            </SelectionSide>
            <SelectionFields>
              <TimeControl value="00h51m50.669s" label="Selection start" />
              <TimeControl value="00h53m08.264s" label="Selection end" />
            </SelectionFields>
          </SelectionBar>
          <SpeedColumn>
            <SpeedBar>
              <Grip />
              <ToolButton aria-label="Play at speed">
                <svg width="16" height="16" viewBox="0 0 16 16"><path d="M1 1l14 7-14 7z" fill="#4d8c6f" /></svg>
              </ToolButton>
              <SpeedSlider>
                <SliderScale width={138} y={17} count={14} labels={['−', '+']} />
                <Range $top={8} defaultValue="32" aria-label="Playback speed" />
              </SpeedSlider>
              <DockEnd />
            </SpeedBar>
          </SpeedColumn>
        </BottomRow>
      </BottomRight>
    </BottomDock>
    <StatusBar>Stopped.</StatusBar>

    <FrequencyAnalysis />
  </Page>
)

export default App
